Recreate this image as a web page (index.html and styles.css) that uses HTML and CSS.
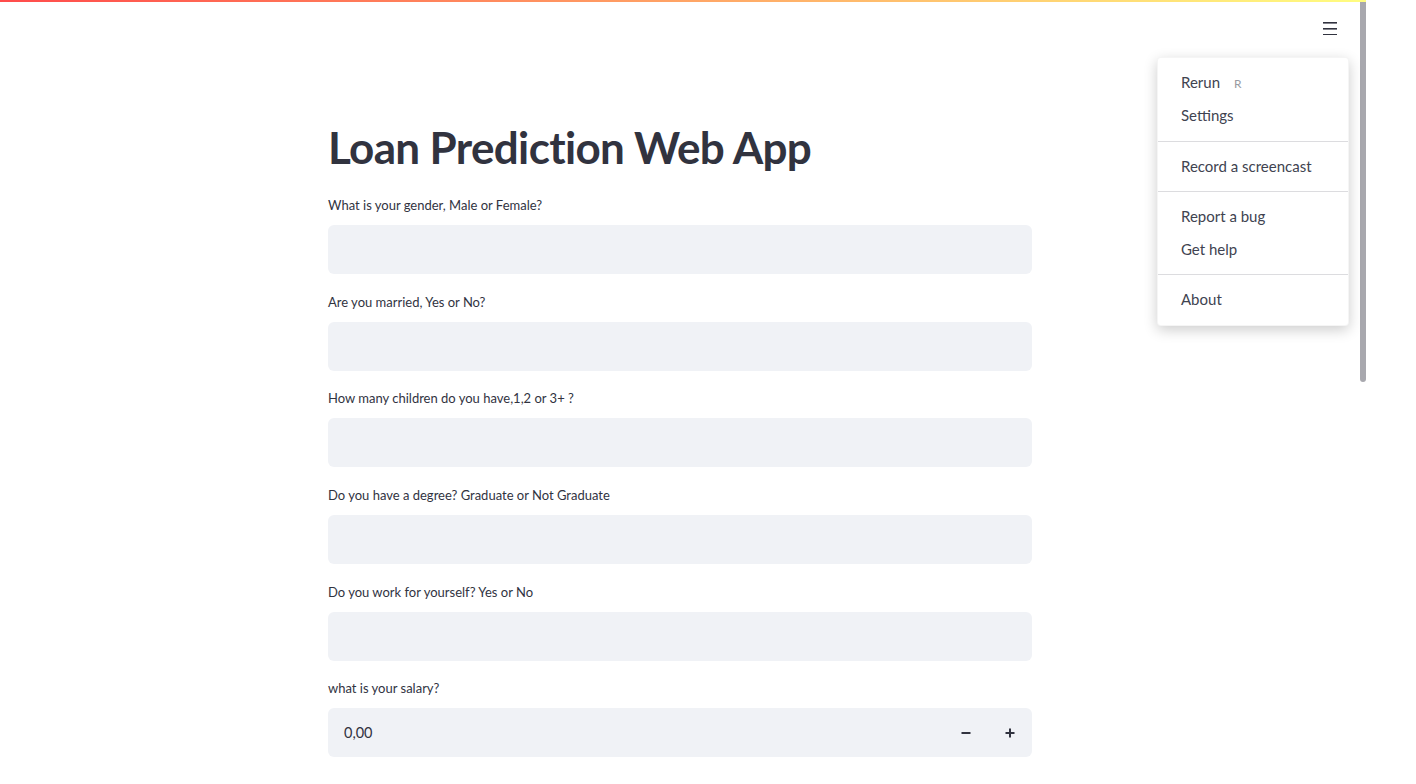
FILE: index.html
```html
<!DOCTYPE html>
<html lang="en">
<head>
<meta charset="utf-8">
<title>Loan Prediction Web App</title>
<link rel="stylesheet" href="styles.css">
</head>
<body>
<div class="page">
  <div class="app">
    <div class="decoration"></div>
    <div class="app-body">
      <div class="main">
        <header class="toolbar">
          <button class="menu-btn" aria-label="Main menu">
            <svg width="16" height="14" viewBox="0 0 16 14"><rect x="1" y="1" width="14" height="1.6" fill="#31333f"/><rect x="1" y="7" width="14" height="1.6" fill="#31333f"/><rect x="1" y="13" width="14" height="1.6" fill="#31333f"/></svg>
          </button>
        </header>
        <section class="block-container">
          <h1 class="title">Loan Prediction Web App</h1>
          <div class="field">
            <label class="field-label">What is your gender, Male or Female?</label>
            <div class="text-input"></div>
          </div>
          <div class="field">
            <label class="field-label">Are you married, Yes or No?</label>
            <div class="text-input"></div>
          </div>
          <div class="field">
            <label class="field-label">How many children do you have,1,2 or 3+ ?</label>
            <div class="text-input"></div>
          </div>
          <div class="field">
            <label class="field-label">Do you have a degree? Graduate or Not Graduate</label>
            <div class="text-input"></div>
          </div>
          <div class="field">
            <label class="field-label">Do you work for yourself? Yes or No</label>
            <div class="text-input"></div>
          </div>
          <div class="field">
            <label class="field-label">what is your salary?</label>
            <div class="text-input number-input">
              <span class="number-value">0,00</span>
              <span class="steppers">
                <span class="step">
                  <svg width="10" height="10" viewBox="0 0 10 10"><rect x="0.5" y="4" width="9" height="2" fill="#31333f"/></svg>
                </span>
                <span class="step">
                  <svg width="10" height="10" viewBox="0 0 10 10"><rect x="0.5" y="4" width="9" height="2" fill="#31333f"/><rect x="4" y="0.5" width="2" height="9" fill="#31333f"/></svg>
                </span>
              </span>
            </div>
          </div>
        </section>
      </div>
      <div class="scrollbar"><div class="thumb"></div></div>
    </div>
    <nav class="menu">
      <ul class="menu-section">
        <li class="menu-item">Rerun <span class="shortcut">R</span></li>
        <li class="menu-item">Settings</li>
      </ul>
      <ul class="menu-section">
        <li class="menu-item">Record a screencast</li>
      </ul>
      <ul class="menu-section">
        <li class="menu-item">Report a bug</li>
        <li class="menu-item">Get help</li>
      </ul>
      <ul class="menu-section">
        <li class="menu-item">About</li>
      </ul>
    </nav>
  </div>
</div>
</body>
</html>
```
FILE: styles.css
```css
html, body {
  margin: 0;
  padding: 0;
  background: #ffffff;
}
body {
  font-family: "Lato", "Liberation Sans", sans-serif;
  color: #31333f;
}
.page {
  width: 1416px;
  height: 784px;
  overflow: hidden;
  display: flex;
}
.app {
  width: 1366px;
  height: 784px;
  position: relative;
  display: flex;
  flex-direction: column;
}
.decoration {
  height: 2px;
  background: linear-gradient(90deg, #ff4b4b, #fffd80);
  flex: none;
}
.app-body {
  flex: 1;
  display: flex;
  min-height: 0;
}
.main {
  flex: 1;
  display: flex;
  flex-direction: column;
}
.toolbar {
  display: flex;
  justify-content: flex-end;
  padding: 11px 24px 0 0;
  height: 40px;
  box-sizing: border-box;
}
.menu-btn {
  background: none;
  border: none;
  padding: 0;
  width: 16px;
  height: 16px;
  display: flex;
  align-items: center;
  justify-content: center;
  margin-right: -2px;
  margin-top: 7px;
}
.block-container {
  width: 704px;
  margin: 0 auto;
  padding-top: 75px;
}
.title {
  margin: 0 0 17px 0;
  font-size: 44px;
  font-weight: 700;
  line-height: 60px;
  letter-spacing: -0.65px;
  color: #31333f;
}
.field {
  display: flex;
  flex-direction: column;
  margin-bottom: 16.67px;
}
.field-label {
  font-size: 13px;
  line-height: 22px;
  height: 31px;
  color: #31333f;
}
.text-input {
  height: 49px;
  background: #f0f2f6;
  border-radius: 6px;
}
.number-input {
  display: flex;
  align-items: center;
  justify-content: space-between;
}
.number-value {
  padding-left: 16px;
  font-size: 14.5px;
  color: #31333f;
}
.steppers {
  display: flex;
  height: 100%;
}
.step {
  width: 44px;
  display: flex;
  align-items: center;
  justify-content: center;
}
.scrollbar {
  width: 6px;
  flex: none;
}
.thumb {
  height: 380px;
  background: #a8a8ae;
  border-radius: 0 0 3px 3px;
}
.menu {
  position: absolute;
  top: 57px;
  left: 1157px;
  width: 192px;
  background: #ffffff;
  border-radius: 4px;
  box-shadow: 0 4px 14px rgba(0, 0, 0, 0.2);
  border: 1px solid rgba(0,0,0,0.04);
  box-sizing: border-box;
}
.menu-section {
  list-style: none;
  margin: 0;
  padding: 8px 0;
  border-bottom: 1px solid #dcdcdf;
}
.menu-section:last-child {
  border-bottom: none;
}
.menu-item {
  height: 33.3px;
  line-height: 33.3px;
  padding-left: 23px;
  font-size: 15px;
  color: #404350;
}
.shortcut {
  font-size: 12px;
  color: #9a9ba2;
  margin-left: 10px;
}
```
